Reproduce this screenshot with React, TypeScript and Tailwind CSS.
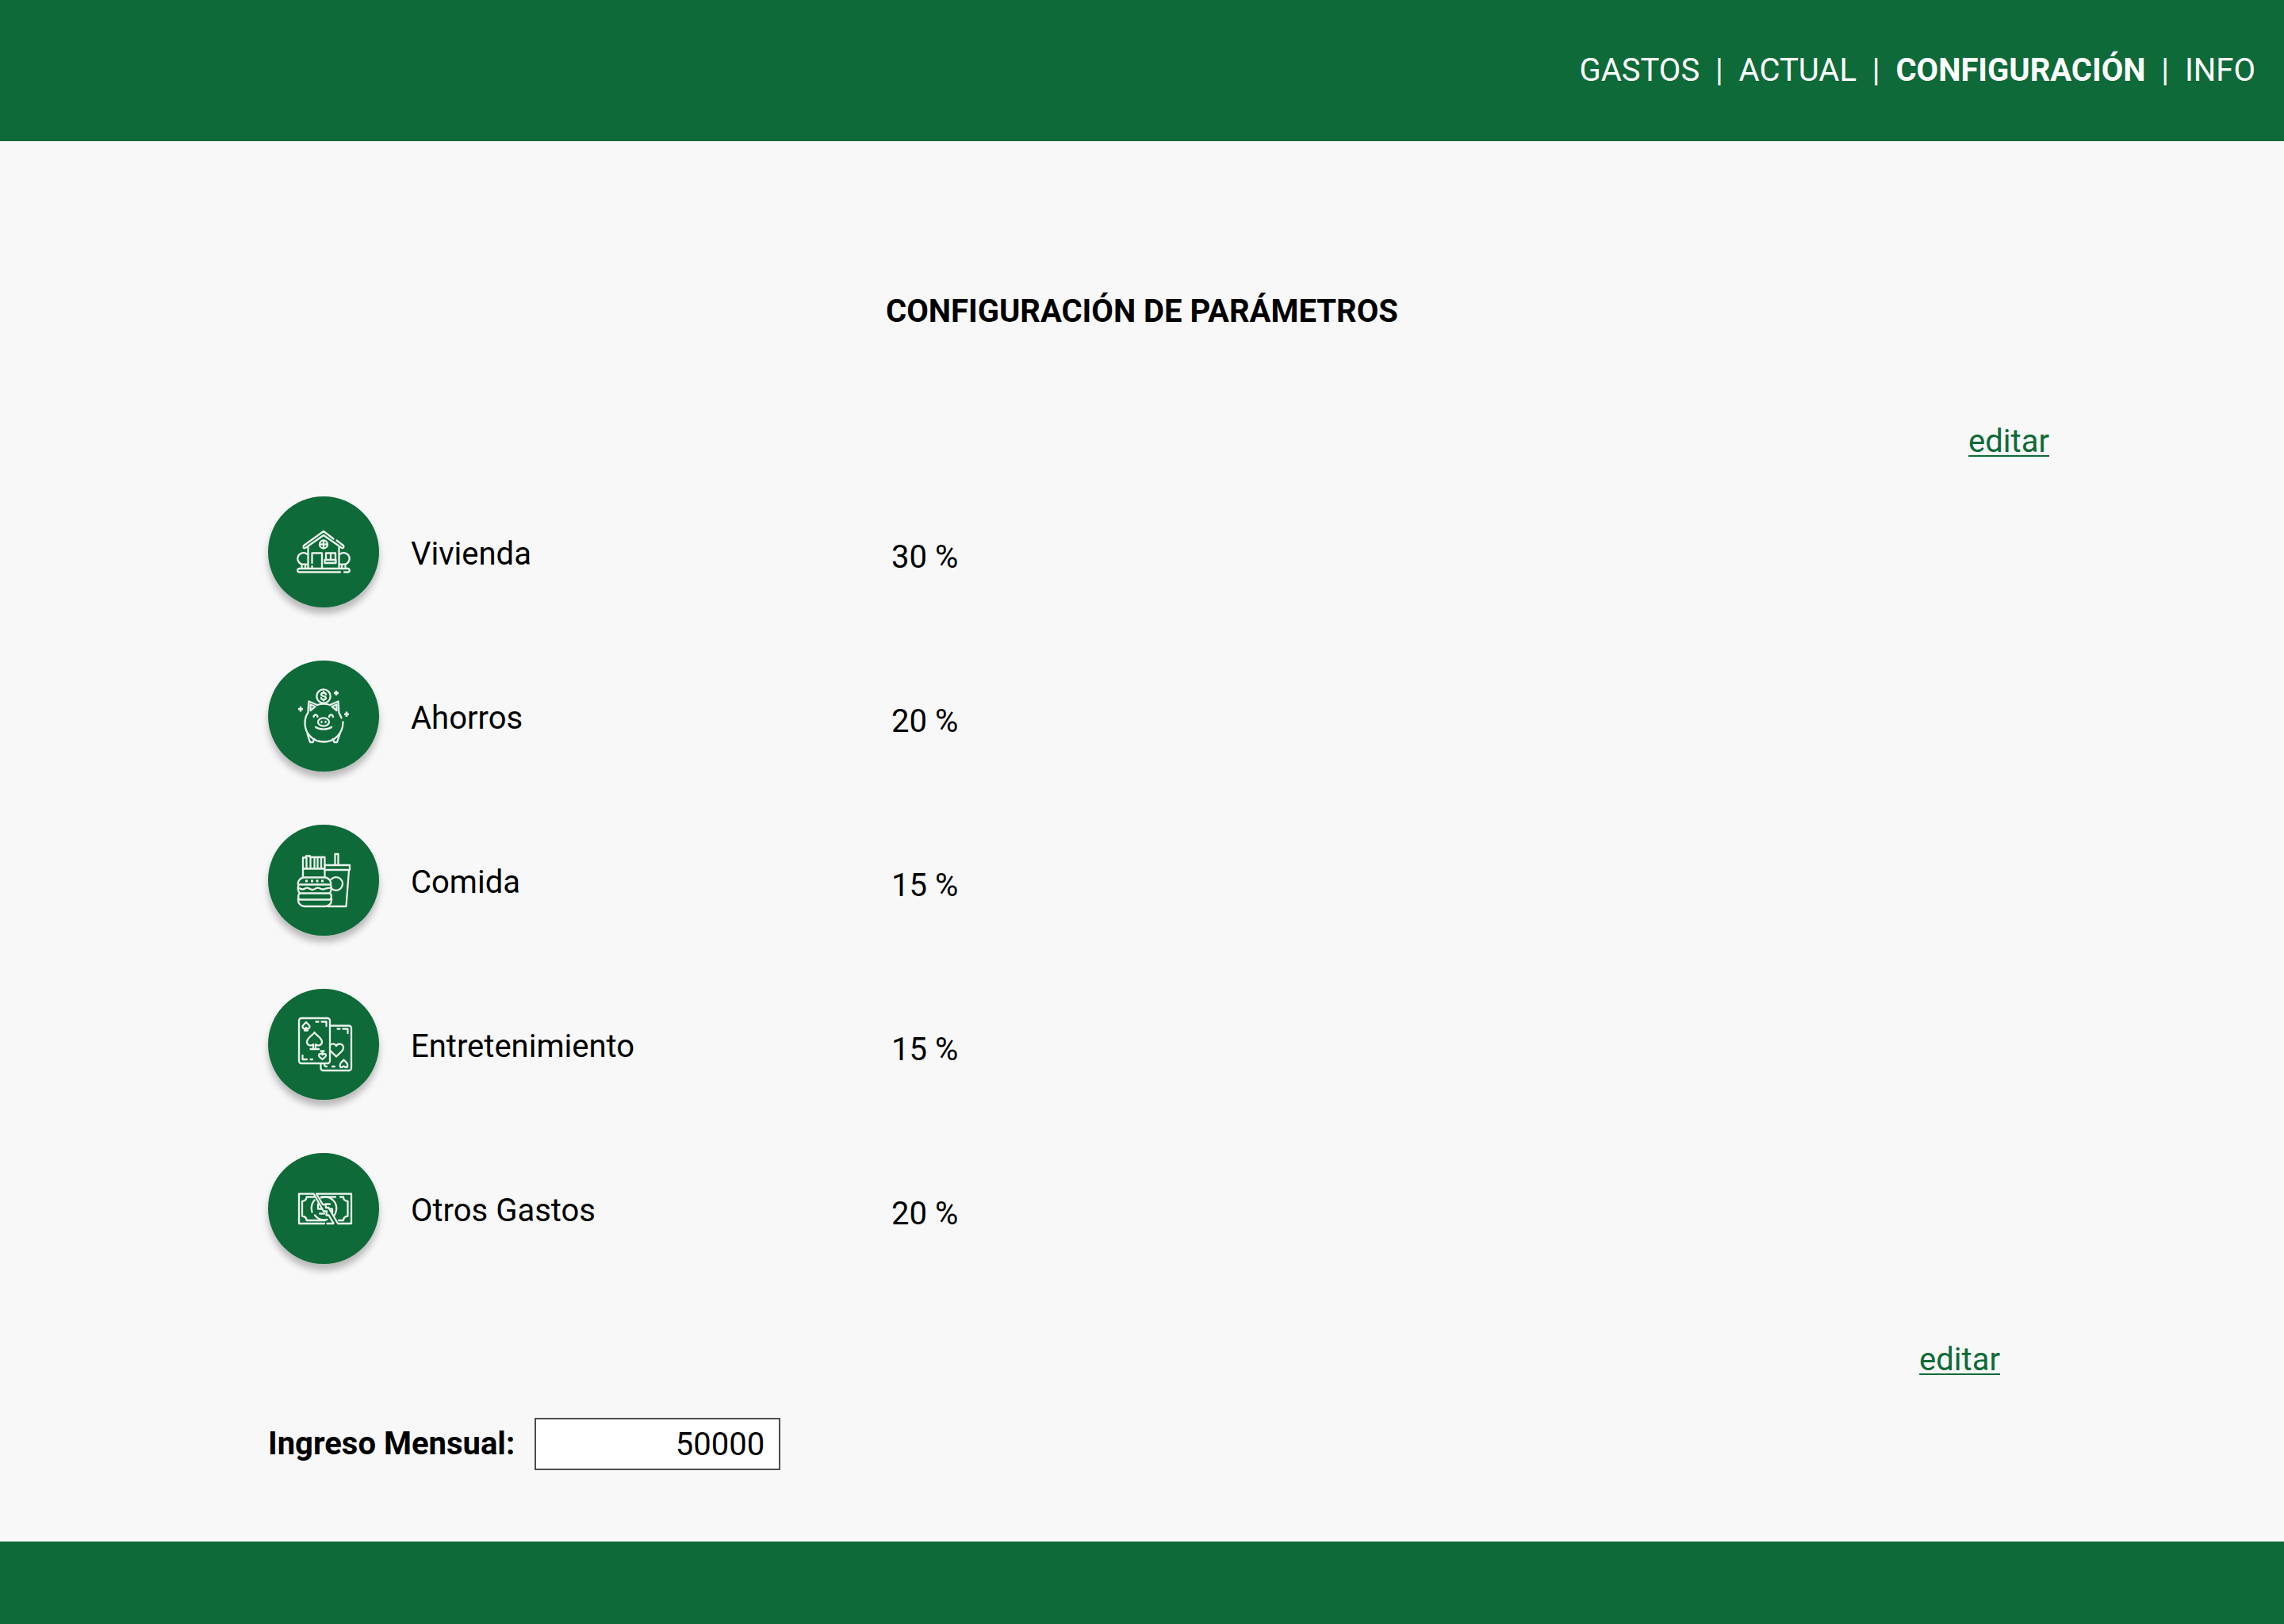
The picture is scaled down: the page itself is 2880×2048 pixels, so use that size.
import { useState, type ReactNode } from "react";

const svgProps = {
  viewBox: "0 0 160 160",
  className: "size-40 shrink-0",
  fill: "none",
  stroke: "currentColor",
  strokeWidth: 2.3,
  strokeLinecap: "round" as const,
  strokeLinejoin: "round" as const,
  "aria-hidden": true,
};

function HouseIcon() {
  return (
    <svg {...svgProps}>
      <path d="M92.500 63.500 80 54 55 72c-1.500 2 0 4 2 3l23-16 23 16c2 .8 3-1.500 2-3l-8.500-6.500" />
      <path d="M60.500 74v26M99.500 74v26" />
      <circle cx="80" cy="70.500" r="5" />
      <path d="M80 66v9M75.500 70.500h9" />
      <path d="M65.500 94V81.500h12.500V100M65.500 98v2" />
      <path d="M83 89.500v-8h12v8M89 82v7.500M81.500 90h14v4h-14z" />
      <path d="M59.500 83a7.300 7.300 0 1 0-5.500 12.700h5.500M100.500 83a7.300 7.300 0 1 1 5.500 12.700h-5.500M52.500 96v4M57 96v4M103 96v4M107.500 96v4" />
      <path d="M101 105.500H49a2.300 2.300 0 0 1 0-4.500h62a2.300 2.300 0 0 1 0 4.500H106" />
    </svg>
  );
}

function PiggyIcon() {
  return (
    <svg {...svgProps}>
      <circle cx="80" cy="55" r="8.700" />
      <path d="M83 53c0-3-6-3-6-.3 0 3 6 1.600 6 4.600 0 2.700-6 2.700-6-.3M80 49.500v1.500M80 59v1.500" />
      <path d="M72 66c5-1.800 11-1.800 16 0l10.500-4.500c.5 6 .5 10 1 14.500 1 2 2.200 4 3 6.500M104.500 87.500c0 15-11 25-24.500 25S56.500 102 56.500 89c0-5 1.500-10 4-13.500 0-5 .5-9 1-14L72 66" />
      <path d="M63.500 73V65.500l6 2.500zM96.500 73V65.500l-6 2.500z" />
      <path d="M67.500 81c.5-3.500 4.500-3.500 5 0M87 81c.5-3.500 4.500-3.500 5 0" />
      <ellipse cx="80" cy="87.500" rx="7" ry="5.200" />
      <path d="M77.500 87v1M82.500 87v1M70 94c5 3.500 15 3.500 20 0" />
      <path d="M59.500 102.500 63 113h3.500l2-4M100.500 102.500 97 113h-3.500l-2-4" />
      <path strokeLinecap="butt" strokeWidth="2.600" d="M96 48v6M93 51h6M51 68v6.500M48 71.200h6M109 74.500v6.500M106 77.700h6" />
    </svg>
  );
}

function FoodIcon() {
  return (
    <svg {...svgProps}>
      <path d="M54 76V51.500h4V49.500h5V51h18.500v25M58.500 52v12M63.500 52v12M68.500 52v12M72.500 52v12M77 52v12M54 65.500h27.500" />
      <path d="M94.500 60V47h4v13M81.500 61H113v6H81.500M112 67.500 108.500 113H85" />
      <path d="M89.500 79a8.300 8.300 0 1 1 0 11" />
      <path d="M48 85.500c-1-4 2.500-9 8-9h25c5.500 0 9 5 8 9z" />
      <path d="M48.500 86c-1.500 3-1 8 1.500 10.500M89 86c1.500 3 1 8-1.500 10.500M48.500 89.500c4 3 6.500 2.500 9 .500s5 2 8.500 2 5-4 8.500-2 5 2 7 1 5-1 7-1.500" />
      <path d="M50 96.500h38c2.500 2 2.500 6 0 8H50c-2.500-2-2.500-6 0-8zM48 103v2c0 4.500 3.500 8 8 8h26c4.500 0 8-3.500 8-8v-2" />
      <path strokeWidth="3" strokeLinecap="butt" d="M57 81h3M64 81h3M70.500 81h3M77 81h3" />
    </svg>
  );
}

function CardsIcon() {
  return (
    <svg {...svgProps}>
      <rect x="49" y="47" width="39" height="57" rx="3" />
      <path d="M88.500 56.500H112a3 3 0 0 1 3 3V110a3 3 0 0 1-3 3H79.500a3 3 0 0 1-3-3v-5.500" />
      <path d="M68.500 65c-2 3.500-9.500 6.500-9.500 12 0 4.500 5.500 5.500 8 3v5.500M68.500 65c2 3.500 9.500 6.500 9.500 12 0 4.500-5.500 5.500-8 3v5.500M63.500 86H74" />
      <path d="M58 52c-1 1.800-4.500 3-4.500 6 0 2.200 3 3 4.500 1 1.500 2 4.500 1.200 4.500-1 0-3-3.500-4.200-4.500-6zM58 59v3.500M56 62.500h4" />
      <path d="M78.500 99c-1-1.800-4.500-2.500-4.500-5 0-2.200 3-3 4.500-1 1.500-2 4.500-1.200 4.500 1 0 2.500-3.500 3.200-4.500 5zM78.500 93v-4.500M76.500 88.500h4" />
      <path d="M89 80.500c2-2 5.500-1.500 7 1.500 2-4 9-3 9 2.500 0 4.500-6 7-9 11-1.800-2.500-5-4.500-7-7" />
      <path d="M101.500 109c-2.500-4 1-6.500 4-9.500 3 3 6.500 5.500 4 9.500-1.500 0-3-.5-4-1.500-1 1-2.500 1.500-4 1.500z" />
      <path d="M70.500 51.500h3M77.500 51.500h6V57M53.500 94v5H59M63.500 99h2.500M97.500 60.500h3M104.500 60.500h6V66M81 105c0 2 1 3 3 3M91 108h3" />
    </svg>
  );
}

/* A banknote torn in two by a jagged diagonal band. */
function BanknoteIcon() {
  return (
    <svg {...svgProps}>
      <path d="M81 99H49V61.500h18.500L80 83.500h4l-.5 5h3L92.500 98.500M84.500 99h8M71 61.500h44V99H98L86.500 79h-3.500l-.5-4h-3.500z" />
      <path d="M68 65.500H58.500c0 3-2 5-5.500 5.500v18.500c3.500.5 5.500 2.500 5.500 5.500H82M77 65.500h18M101 65.500h4c0 3 2.500 5 5.500 5.500v18.500c-3 .5-5.500 2.500-5.500 5.500h-6" />
      <path d="M68.500 69.500c-4 5-4.500 10-3 15M69 88.500c4 5 9.500 7 15.500 5.500M77 66.500c12-4 20.500 6 19 15.500-.3 3-1.300 5.500-3 7.500" />
      <path d="M73 74.500v6h5M82.500 74.500H88M87 80.500h4v5M75 86.500h6" />
    </svg>
  );
}

type Category = { name: string; percent: number; icon: ReactNode };

const categories: Category[] = [
  { name: "Vivienda", percent: 30, icon: <HouseIcon /> },
  { name: "Ahorros", percent: 20, icon: <PiggyIcon /> },
  { name: "Comida", percent: 15, icon: <FoodIcon /> },
  { name: "Entretenimiento", percent: 15, icon: <CardsIcon /> },
  { name: "Otros Gastos", percent: 20, icon: <BanknoteIcon /> },
];

const navItems = ["GASTOS", "ACTUAL", "CONFIGURACIÓN", "INFO"];

function CategoryRow({ name, percent, icon }: Category) {
  return (
    <li className="flex items-center">
      <span className="flex size-[140px] shrink-0 items-center justify-center rounded-full bg-[#0e6a38] text-[#e9f2ec] shadow-[0_8px_8px_rgba(0,0,0,0.25)]">
        {icon}
      </span>
      <span className="ml-10 w-[606px] pt-[6px]">{name}</span>
      <span className="pt-[14px]">{percent} %</span>
    </li>
  );
}

function EditLink() {
  return (
    <a href="#editar" className="text-[#0e6a38] underline decoration-2 underline-offset-4">
      editar
    </a>
  );
}

export default function App() {
  const [income, setIncome] = useState("50000");

  return (
    <div className="flex min-h-screen flex-col bg-[#f8f8f8] font-['Roboto',sans-serif] text-[40px] leading-[48px] text-black">
      <header className="flex h-[178px] items-center justify-end bg-[#0e6a38] px-9 text-white">
        <nav aria-label="Principal">
          <ul className="flex">
            {navItems.map((item, index) => (
              <li key={item} className="whitespace-pre">
                {index > 0 && "  |  "}
                <a
                  href={`#${item.toLowerCase()}`}
                  aria-current={item === "CONFIGURACIÓN" ? "page" : undefined}
                  className="aria-[current=page]:font-bold"
                >
                  {item}
                </a>
              </li>
            ))}
          </ul>
        </nav>
      </header>

      <main className="grow pt-[191px] pl-[338px]">
        <h1 className="pr-[338px] text-center font-bold">CONFIGURACIÓN DE PARÁMETROS</h1>

        <div className="mt-[116px] flex justify-end pr-[296px]">
          <EditLink />
        </div>

        <ul className="mt-[45px] flex flex-col gap-[67px]">
          {categories.map((category) => (
            <CategoryRow key={category.name} {...category} />
          ))}
        </ul>

        <div className="mt-[97px] flex justify-end pr-[358px]">
          <EditLink />
        </div>

        <div className="mt-[49px] flex items-center">
          <label htmlFor="income" className="font-bold">
            Ingreso Mensual:
          </label>
          <input
            id="income"
            type="text"
            inputMode="numeric"
            value={income}
            onChange={(event) => setIncome(event.target.value)}
            className="ml-[25px] h-[66px] w-[310px] border-2 border-[#4d4d4d] bg-white px-[18px] text-right"
          />
        </div>
      </main>

      <footer className="h-[104px] bg-[#0e6a38]" />
    </div>
  );
}
